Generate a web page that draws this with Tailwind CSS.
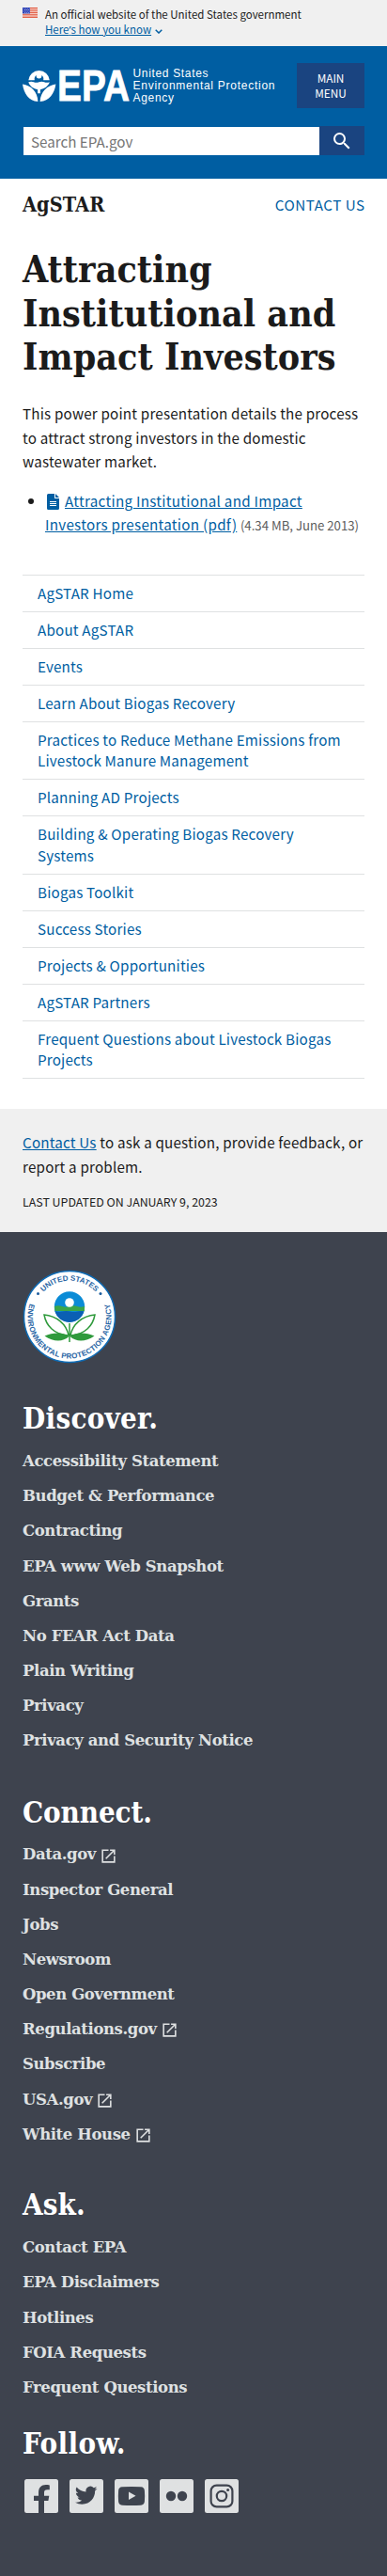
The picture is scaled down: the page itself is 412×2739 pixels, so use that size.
<!DOCTYPE html>
<html lang="en">
<head>
<meta charset="utf-8">
<meta name="viewport" content="width=device-width, initial-scale=1">
<title>Attracting Institutional and Impact Investors | US EPA</title>
<script src="https://cdn.jsdelivr.net/npm/@tailwindcss/browser@4"></script>
</head>
<body class="bg-white text-[#1b1b1b] font-['Noto_Sans_CJK_SC','Source_Sans_Pro',sans-serif] text-[15.2px] leading-[25.4px] tracking-[0.19px]">
<svg class="hidden">
  <symbol id="launch" viewBox="0 0 24 24"><path fill="currentColor" d="M19 19H5V5h7V3H3v18h18v-9h-2v7zM14 3v2h3.59l-9.83 9.83 1.41 1.41L19 6.41V10h2V3h-7z"/></symbol>
</svg>

<section class="flex h-[49px] bg-[#f0f0f0] px-6 pt-[7px] text-[11.5px] leading-4 tracking-normal">
  <svg class="mt-px h-[11px] w-4 shrink-0" viewBox="0 0 16 11"><path fill="#fff" d="M0 0h16v11H0z"/><path stroke="#db3e1f" stroke-width=".9" d="M0 .5h16M0 2.2h16M0 3.9h16M0 5.6h16M0 7.3h16M0 9h16M0 10.6h16"/><path fill="#1e33b1" d="M0 0h8v6.4H0z"/><path stroke="#fff" stroke-width=".8" stroke-dasharray=".8 1.2" d="M.8 1.2H8M1.8 2.6H8M.8 4H8M1.8 5.4H8"/></svg>
  <div class="ml-2">
    <p>An official website of the United States government</p>
    <p class="flex items-center text-[#005ea2]"><a class="underline">Here<span class="font-['Noto_Sans']">’</span>s how you know</a><svg class="mt-1 ml-1 h-[5px] w-2" viewBox="0 0 8 5" fill="none" stroke="currentColor" stroke-width="1.5"><path d="M.7.8 4 4 7.300.8"/></svg></p>
  </div>
</section>

<header class="h-[141px] bg-[#005ea2] px-6 pt-[18px] text-white">
  <div class="flex h-12 justify-between">
    <svg class="mt-[5px] h-[38px] w-[270px] overflow-visible tracking-normal" viewBox="0 0 270 38" fill="#fff">
      <path d="M6.300 13.300a11.300 11.300 0 0 1 22.500 0h-6.600a4.900 4.900 0 1 0-9.400 0z"/>
      <circle cx="17.500" cy="8.600" r="2.900"/>
      <path d="M6.300 15.300q3-1 5.600 0t5.600 0 5.600 0 5.700 0c-1.500 4.600-5.600 7.300-9.900 7.900v4h-2.800v-4c-4.300-.600-8.400-3.300-9.800-7.900z"/>
      <path d="M0 17.500C9 19 16 25 16.400 36 6.500 35.500 1.500 27.500 0 17.500zM35.400 17.500C26.400 19 19.200 25 18.600 36c10-.500 15.300-8.500 16.800-18.500z"/>
      <text x="37" y="34.800" textLength="77" lengthAdjust="spacingAndGlyphs" font-family="Liberation Sans" font-weight="700" font-size="47" stroke="#fff" stroke-width=".8">EPA</text>
      <g font-family="Liberation Sans" font-size="12">
        <text x="117.500" y="10" textLength="80">United States</text>
        <text x="117.500" y="22.700" textLength="151">Environmental Protection</text>
        <text x="117.500" y="35.500" textLength="43.500">Agency</text>
      </g>
    </svg>
    <button class="h-12 w-[72px] bg-[#1a4480] text-[11.800px] leading-4 tracking-normal">MAIN<br>MENU</button>
  </div>
  <div class="mt-[19px] flex h-[31px]">
    <div class="mt-px ml-px h-[30px] w-[315px] bg-white pl-2 leading-[30px] tracking-normal text-[#757575]">Search EPA.gov</div>
    <div class="flex flex-1 items-center justify-center bg-[#1a4480]"><svg class="h-6 w-6" viewBox="0 0 24 24" fill="currentColor"><path d="M15.500 14h-.790l-.280-.270A6.471 6.471 0 0 0 16 9.500 6.500 6.500 0 1 0 9.500 16c1.610 0 3.090-.590 4.230-1.570l.270.280v.790l5 4.990L20.490 19l-4.990-5zm-6 0C7.010 14 5 11.990 5 9.500S7.010 5 9.500 5 14 7.010 14 9.500 11.990 14 9.500 14z"/></svg></div>
  </div>
</header>

<main class="px-6">
  <div class="flex h-[73px] justify-between pt-[15px]">
    <h2 class="font-['DejaVu_Serif_Condensed','DejaVu_Serif',serif] font-stretch-condensed text-[21.5px] leading-[26px] font-bold tracking-[0.1px]">AgSTAR</h2>
    <a class="text-[#005ea2] leading-[25px] tracking-[0.5px] -mr-[0.5px]">CONTACT US</a>
  </div>
  <h1 class="font-['DejaVu_Serif_Condensed','DejaVu_Serif',serif] font-stretch-condensed text-[39px] leading-[46.7px] font-bold tracking-[0.05px] whitespace-nowrap">Attracting<br>Institutional and<br>Impact Investors</h1>
  <p class="mt-[24px] whitespace-nowrap">This power point presentation details the process<br>to attract strong investors in the domestic<br>wastewater market.</p>
  <ul class="mt-[16.500px] flex whitespace-nowrap">
    <li class="flex">
      <span class="mt-[10.500px] mr-3 ml-1.5 h-1.5 w-1.5 shrink-0 rounded-full bg-[#1b1b1b]"></span>
      <div>
        <a class="text-[#005ea2] tracking-[0.28px]"><svg class="mr-1.5 ml-[2px] inline h-[17px] w-[13px] align-[-3px]" viewBox="0 0 13 17"><path fill="currentColor" d="M1.500 0H8v5h5v10.500a1.500 1.500 0 0 1-1.500 1.500h-10A1.500 1.500 0 0 1 0 15.500v-14A1.500 1.500 0 0 1 1.500 0zM9 0l4 4H9z"/><path stroke="#fff" d="M3 8.500h7M3 10.500h7M3 12.500h7"/></svg><span class="underline">Attracting Institutional and Impact</span><br><span class="underline">Investors presentation (pdf)</span></a> <span class="text-[13.200px] tracking-normal text-[#5c5c5c]">(4.34 MB, June 2013)</span>
      </div>
    </li>
  </ul>

  <nav class="mt-[39.500px] border-t border-[#dfe1e2] leading-[22.050px] text-[#005ea2]">
    <a class="block border-b border-[#dfe1e2] px-4 pt-[7px] pb-[9px]">AgSTAR Home</a>
    <a class="block border-b border-[#dfe1e2] px-4 pt-[7px] pb-[9px]">About AgSTAR</a>
    <a class="block border-b border-[#dfe1e2] px-4 pt-[7px] pb-[9px]">Events</a>
    <a class="block border-b border-[#dfe1e2] px-4 pt-[7px] pb-[9px]">Learn About Biogas Recovery</a>
    <a class="block border-b border-[#dfe1e2] px-4 pt-[7px] pb-[9px]">Practices to Reduce Methane Emissions from<br>Livestock Manure Management</a>
    <a class="block border-b border-[#dfe1e2] px-4 pt-[7px] pb-[9px]">Planning AD Projects</a>
    <a class="block border-b border-[#dfe1e2] px-4 pt-[7px] pb-[9px]">Building &amp; Operating Biogas Recovery<br>Systems</a>
    <a class="block border-b border-[#dfe1e2] px-4 pt-[7px] pb-[9px]">Biogas Toolkit</a>
    <a class="block border-b border-[#dfe1e2] px-4 pt-[7px] pb-[9px]">Success Stories</a>
    <a class="block border-b border-[#dfe1e2] px-4 pt-[7px] pb-[9px]">Projects &amp; Opportunities</a>
    <a class="block border-b border-[#dfe1e2] px-4 pt-[7px] pb-[9px]">AgSTAR Partners</a>
    <a class="block border-b border-[#dfe1e2] px-4 pt-[7px] pb-[9px]">Frequent Questions about Livestock Biogas<br>Projects</a>
  </nav>
</main>

<section class="mt-[32.250px] h-[131px] bg-[#f0f0f0] px-6 pt-[23px]">
  <p class="whitespace-nowrap"><a class="text-[#005ea2] underline">Contact Us</a> to ask a question, provide feedback, or<br>report a problem.</p>
  <p class="mt-[13px] text-[12.400px] leading-[24px] tracking-normal">LAST UPDATED ON JANUARY 9, 2023</p>
</section>

<footer class="h-[1429px] bg-[#3e434e] px-6 pt-10 font-['DejaVu_Serif',serif] text-[16.500px] font-bold tracking-[-0.4px] text-[#dfe1e2]">
  <svg class="h-[100px] w-[100px] tracking-normal" viewBox="0 0 100 100">
    <circle cx="50" cy="50" r="48.500" fill="#fff" stroke="#0e6cb6" stroke-width="1.500"/>
    <defs>
      <path id="arcTop" d="M11.700 50a38.300 38.300 0 0 1 76.600 0"/>
      <path id="arcBottom" d="M10.700 29.100A44.500 44.500 0 1 0 89.300 29.100"/>
    </defs>
    <g font-family="Liberation Sans" font-weight="700" fill="#2a66a5">
      <text font-size="8" text-anchor="middle"><textPath href="#arcTop" startOffset="50%">UNITED STATES</textPath></text>
      <text font-size="8" text-anchor="middle" letter-spacing=".25"><textPath href="#arcBottom" startOffset="50%">ENVIRONMENTAL PROTECTION AGENCY</textPath></text>
    </g>
    <circle cx="16.500" cy="25.500" r="1.500" fill="#1b5c9e"/><circle cx="83" cy="25.500" r="1.500" fill="#1b5c9e"/>
    <circle cx="50" cy="39.500" r="16.200" fill="#0a8bd6"/>
    <path fill="#3aa648" d="M34 39q4-1.500 8 0t8 0 8 0 8 0v5H34.500z"/>
    <path fill="#0b5fb3" d="M34.500 44q4 1.500 8 .500t8 0 8 0 7 0a16.200 16.200 0 0 1-31 0z"/>
    <circle cx="50" cy="35" r="4.800" fill="#fff"/>
    <g fill="none" stroke="#2f9a3c" stroke-width="1.500"><path d="M50 57v20M49 70C47 58 36 49 23 48c2 11 10 21 26 22zM51 70c2-12 13-21 26-22-2 11-10 21-26 22z"/></g>
    <path fill="#2f9a3c" d="M49.500 71C42 66 32 67 23.500 70.500 33 77 43 77 49.500 71zM50.500 71C58 66 68 67 76.500 70.500 67 77 57 77 50.500 71z"/>
  </svg>

  <h2 class="mt-[38px] font-['DejaVu_Serif_Condensed','DejaVu_Serif',serif] font-stretch-condensed text-[31px] leading-10 tracking-[0.3px] text-white">Discover.</h2>
  <ul class="mt-[7px] leading-[37.170px]">
    <li>Accessibility Statement</li><li>Budget &amp; Performance</li><li>Contracting</li><li>EPA www Web Snapshot</li><li>Grants</li><li>No FEAR Act Data</li><li>Plain Writing</li><li>Privacy</li><li>Privacy and Security Notice</li>
  </ul>
  <h2 class="mt-[37.200px] font-['DejaVu_Serif_Condensed','DejaVu_Serif',serif] font-stretch-condensed text-[31px] leading-10 tracking-[-0.1px] text-white">Connect.</h2>
  <ul class="mt-[6.600px] leading-[37.170px]">
    <li class="flex items-center">Data.gov<svg class="mt-0.5 ml-1 h-[19px] w-[19px]"><use href="#launch"/></svg></li>
    <li>Inspector General</li><li>Jobs</li><li>Newsroom</li><li>Open Government</li>
    <li class="flex items-center">Regulations.gov<svg class="mt-0.5 ml-1 h-[19px] w-[19px]"><use href="#launch"/></svg></li>
    <li>Subscribe</li>
    <li class="flex items-center">USA.gov<svg class="mt-0.5 ml-1 h-[19px] w-[19px]"><use href="#launch"/></svg></li>
    <li class="flex items-center">White House<svg class="mt-0.5 ml-1 h-[19px] w-[19px]"><use href="#launch"/></svg></li>
  </ul>
  <h2 class="mt-[36.500px] font-['DejaVu_Serif_Condensed','DejaVu_Serif',serif] font-stretch-condensed text-[31px] leading-10 tracking-[0.1px] text-white">Ask.</h2>
  <ul class="mt-[6.800px] leading-[37.170px]">
    <li>Contact EPA</li><li>EPA Disclaimers</li><li>Hotlines</li><li>FOIA Requests</li><li>Frequent Questions</li>
  </ul>
  <h2 class="mt-[21.200px] font-['DejaVu_Serif_Condensed','DejaVu_Serif',serif] font-stretch-condensed text-[31px] leading-10 tracking-[0.4px] text-white">Follow.</h2>
  <div class="mt-[18px] ml-0.5 flex gap-3">
    <svg class="h-9 w-9" viewBox="0 0 36 36"><rect width="36" height="36" rx="2.500" fill="#dfe1e2"/><path fill="#3e434e" d="M15 36V23h-5v-5.200h5v-3.500C15 9 18 6 22.800 6c1.500 0 3 .200 4 .400v4.800h-2.400c-2.500 0-3.400 1.200-3.400 3.200v3.400h5.300L25.400 23H21v13z"/></svg>
    <svg class="h-9 w-9" viewBox="0 0 36 36"><rect width="36" height="36" rx="2.500" fill="#dfe1e2"/><path fill="#3e434e" transform="translate(6 5.500) scale(.98)" d="M23.950 4.570a10 10 0 0 1-2.820.770 4.960 4.960 0 0 0 2.160-2.720c-.950.550-2 .950-3.130 1.180a4.920 4.920 0 0 0-8.380 4.480C7.690 8.090 4.070 6.130 1.640 3.160a4.920 4.920 0 0 0 1.520 6.570 4.900 4.900 0 0 1-2.230-.610v.060c0 2.380 1.700 4.370 3.950 4.820a5 5 0 0 1-2.210.080 4.940 4.940 0 0 0 4.600 3.420A9.870 9.870 0 0 1 0 19.540a14 14 0 0 0 7.550 2.210c9.050 0 14-7.500 14-13.980 0-.210 0-.420-.020-.630a9.940 9.940 0 0 0 2.460-2.550z"/></svg>
    <svg class="h-9 w-9" viewBox="0 0 36 36"><rect width="36" height="36" rx="2.500" fill="#dfe1e2"/><path fill="#3e434e" d="M8 8.300q10-.8 20 0c2.500.2 3.700 1.500 3.900 3.900q.5 5.800 0 11.600c-.2 2.400-1.500 3.700-3.900 3.900q-10 .8-20 0c-2.500-.2-3.700-1.500-3.900-3.900q-.5-5.800 0-11.600C4.300 9.800 5.600 8.500 8 8.300z"/><path fill="#dfe1e2" d="m15 13.500 7.500 4.300-7.500 4.300z"/></svg>
    <svg class="h-9 w-9" viewBox="0 0 36 36"><rect width="36" height="36" rx="2.500" fill="#dfe1e2"/><g fill="#3e434e"><circle cx="12" cy="18" r="5.200"/><circle cx="24" cy="18" r="5.200"/></g></svg>
    <svg class="h-9 w-9" viewBox="0 0 36 36"><rect width="36" height="36" rx="2.500" fill="#dfe1e2"/><g fill="none" stroke="#3e434e" stroke-width="2.200"><rect x="6.600" y="6.600" width="22.800" height="22.800" rx="6"/><circle cx="18" cy="18" r="5.200"/></g><circle cx="24.600" cy="11.400" r="1.500" fill="#3e434e"/></svg>
  </div>
</footer>
</body>
</html>
